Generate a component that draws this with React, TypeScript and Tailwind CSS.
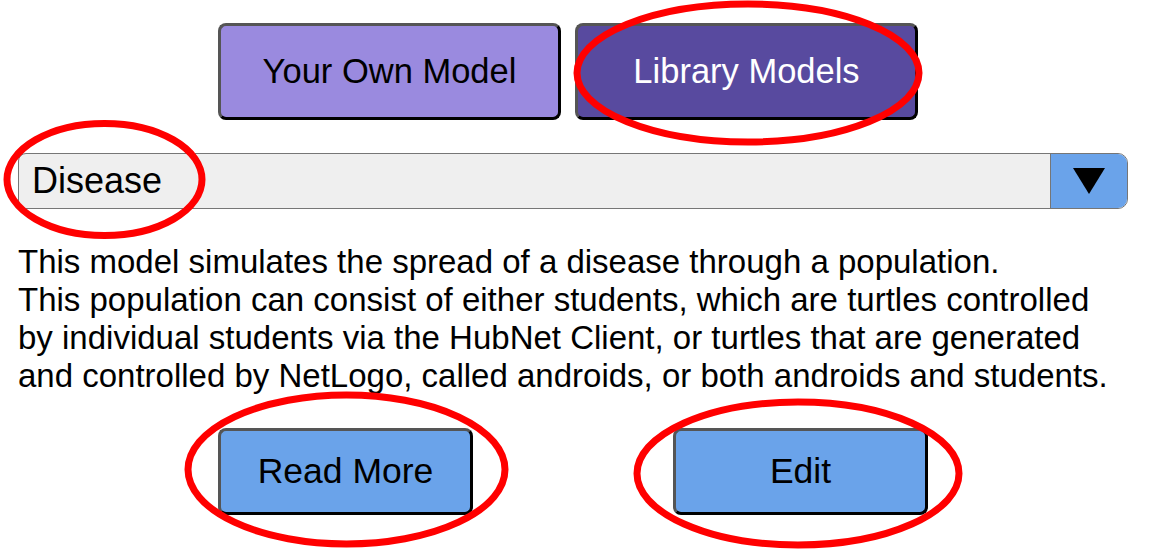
import React from "react";

const btnEdge =
  "border-[3px] border-t-[#555555] border-l-[#555555] border-b-black border-r-black rounded-[8px]";

function ModelTabs() {
  return (
    <div className="flex justify-center gap-[14px] pr-[10px]">
      <button
        className={`${btnEdge} w-[343px] h-[97px] bg-[#9a8adf] text-black text-[34.5px] flex items-center justify-center`}
      >
        Your Own Model
      </button>
      <button
        className={`${btnEdge} w-[343px] h-[97px] bg-[#584a9f] text-white text-[34.5px] flex items-center justify-center`}
      >
        Library Models
      </button>
    </div>
  );
}

function ModelSelect() {
  return (
    <div className="mt-[33px] h-[56px] flex border border-[#767676] rounded-l-[8px] rounded-r-[10px] overflow-hidden bg-[#efefef]">
      <div className="flex-1 flex items-center pl-[13px] text-[36px] text-black">
        Disease
      </div>
      <div className="w-[77px] bg-[#6aa3ea] border-l border-[#767676] flex items-center justify-center">
        <svg width="32" height="26" viewBox="0 0 32 26">
          <polygon points="0,0 32,0 16,26" fill="black" />
        </svg>
      </div>
    </div>
  );
}

function Annotations() {
  return (
    <svg
      className="absolute inset-0 pointer-events-none"
      width="1155"
      height="556"
      viewBox="0 0 1155 556"
    >
      <g fill="none" stroke="#ff0000" strokeWidth="7">
        <ellipse cx="748" cy="73" rx="171" ry="69" />
        <ellipse cx="104.5" cy="179.5" rx="97.5" ry="56" />
        <ellipse cx="346.5" cy="469.5" rx="158.5" ry="74.5" />
        <ellipse cx="798" cy="473.5" rx="161" ry="71.5" />
      </g>
    </svg>
  );
}

export default function App() {
  return (
    <div className="relative w-[1155px] h-[556px] overflow-hidden bg-white font-['Liberation_Sans',Arial,sans-serif]">
      <div className="pl-[18px] pr-[27px] pt-[23px]">
        <ModelTabs />
        <ModelSelect />
        <p className="mt-[34px] text-[33px] leading-[38px] text-black whitespace-nowrap">
          This model simulates the spread of a disease through a population.
          <br />
          This population can consist of either students, which are turtles controlled
          <br />
          by individual students via the HubNet Client, or turtles that are generated
          <br />
          and controlled by NetLogo, called androids, or both androids and students.
        </p>
        <div className="mt-[33px] flex justify-center gap-[200px]">
          <button
            className={`${btnEdge} w-[255px] h-[87px] bg-[#6aa3ea] text-black text-[35.5px] flex items-center justify-center`}
          >
            Read More
          </button>
          <button
            className={`${btnEdge} w-[255px] h-[87px] bg-[#6aa3ea] text-black text-[35.5px] flex items-center justify-center`}
          >
            Edit
          </button>
        </div>
      </div>
      <Annotations />
    </div>
  );
}
